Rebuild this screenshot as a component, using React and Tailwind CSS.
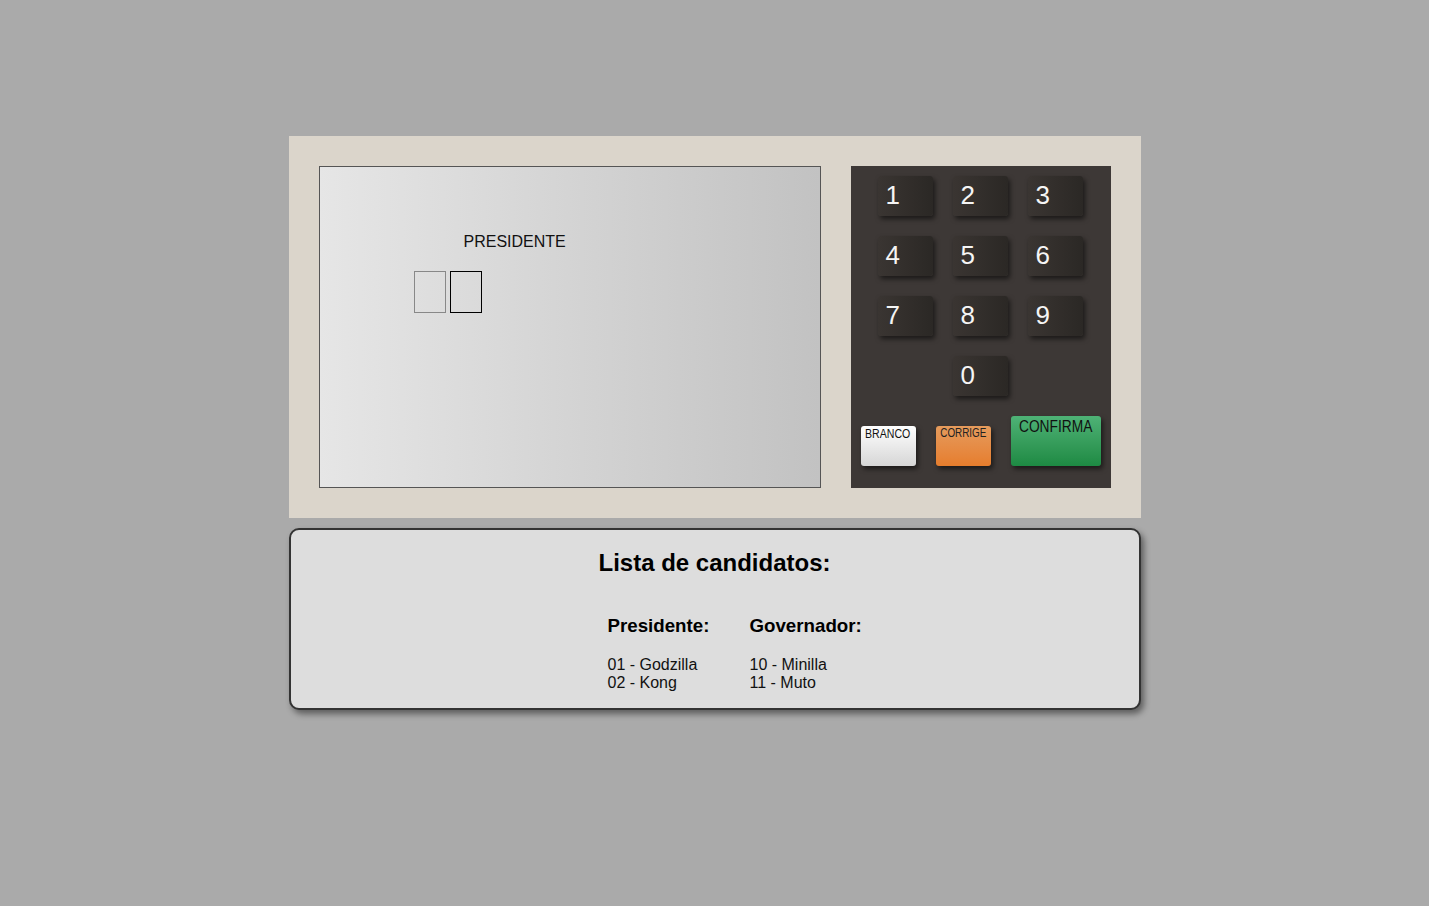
import React from 'react';

const font = { fontFamily: '"Liberation Sans", Arial, sans-serif' };

const NumKey = ({ n }) => (
  <div className="w-[55px] h-[40px] rounded-[3px] bg-gradient-to-r from-[#3a3532] to-[#2b2825] shadow-[2px_3px_5px_rgba(0,0,0,0.55)] pl-[8px] pb-[2px] flex items-center text-[26px] text-[#f5f5f5] leading-none">
    {n}
  </div>
);

const KeyRow = ({ keys }) => (
  <div className="flex gap-[20px] pl-[27px]">
    {keys.map((k) => (
      <NumKey key={k} n={k} />
    ))}
  </div>
);

export default function App() {
  return (
    <div className="min-h-[906px] bg-[#aaaaaa] pt-[136px]" style={font}>
      {/* Urna */}
      <div className="mx-auto w-[852px] h-[382px] bg-[#dbd5cb] p-[30px] flex justify-between">
        {/* Tela */}
        <div className="w-[502px] h-[322px] border border-[#555555] bg-gradient-to-r from-[#e6e6e6] to-[#c2c2c2]">
          <div className="ml-[144px] mt-[66px] text-[16px] leading-[18px] text-[#111111]">PRESIDENTE</div>
          <div className="ml-[94px] mt-[20px] flex gap-[4px]">
            <div className="w-[32px] h-[42px] border border-[#888888]" />
            <div className="w-[32px] h-[42px] border border-[#000000]" />
          </div>
        </div>

        {/* Teclado */}
        <div className="w-[260px] h-[322px] bg-[#3d3836] pt-[10px] flex flex-col gap-[20px]">
          <KeyRow keys={['1', '2', '3']} />
          <KeyRow keys={['4', '5', '6']} />
          <KeyRow keys={['7', '8', '9']} />
          <div className="flex pl-[102px]">
            <NumKey n="0" />
          </div>
          <div className="flex items-end gap-[20px] px-[10px]">
            <div className="w-[55px] h-[40px] rounded-[3px] bg-gradient-to-b from-[#ffffff] to-[#d6d6d6] shadow-[2px_3px_5px_rgba(0,0,0,0.55)] text-[12px] leading-[14px] pt-[1px] text-center text-[#111111]">
              <span className="inline-block scale-x-[0.88]">BRANCO</span>
            </div>
            <div className="w-[55px] h-[40px] rounded-[3px] bg-gradient-to-b from-[#e59b5c] to-[#e67d2c] shadow-[2px_3px_5px_rgba(0,0,0,0.55)] text-[13px] leading-[13px] text-center text-[#222222] flex justify-center">
              <span className="inline-block scale-x-[0.76] whitespace-nowrap">CORRIGE</span>
            </div>
            <div className="w-[90px] h-[50px] rounded-[3px] bg-gradient-to-b from-[#4eb276] to-[#1d8a43] shadow-[2px_3px_5px_rgba(0,0,0,0.55)] text-[16px] leading-[18px] pt-[2px] text-center text-[#111111] flex justify-center">
              <span className="inline-block scale-x-[0.86] whitespace-nowrap">CONFIRMA</span>
            </div>
          </div>
        </div>
      </div>

      {/* Lista de candidatos */}
      <div className="mx-auto mt-[10px] w-[852px] h-[182px] border-2 border-[#333333] rounded-[10px] bg-[#dddddd] shadow-[3px_4px_6px_rgba(0,0,0,0.45)] pt-[20px]">
        <h2 className="text-center text-[24px] leading-[26px] font-bold text-[#000000]">Lista de candidatos:</h2>
        <div className="flex pl-[317px] mt-[39px]">
          <div className="w-[142px]">
            <div className="text-[18.72px] leading-[22px] font-bold text-[#000000]">Presidente:</div>
            <div className="mt-[19px] text-[16px] leading-[18px] text-[#111111]">
              <div>01 - Godzilla</div>
              <div>02 - Kong</div>
            </div>
          </div>
          <div>
            <div className="text-[18.72px] leading-[22px] font-bold text-[#000000]">Governador:</div>
            <div className="mt-[19px] text-[16px] leading-[18px] text-[#111111]">
              <div>10 - Minilla</div>
              <div>11 - Muto</div>
            </div>
          </div>
        </div>
      </div>
    </div>
  );
}
